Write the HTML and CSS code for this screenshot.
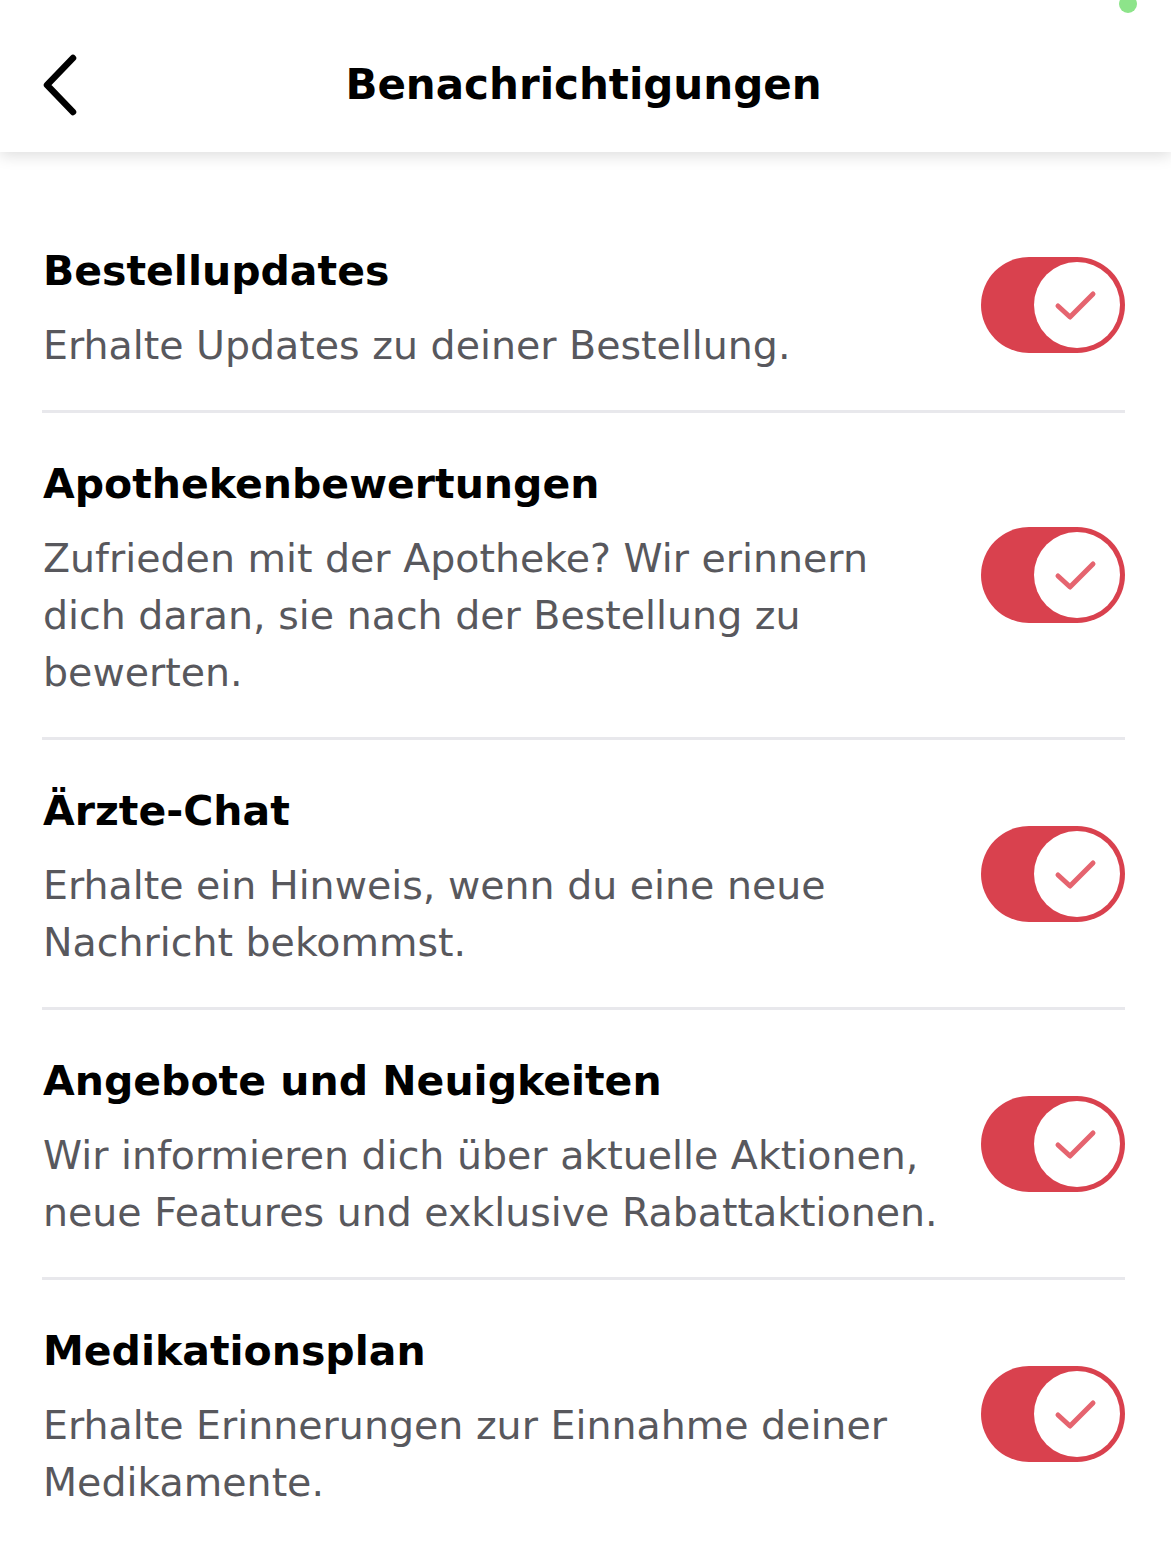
FILE: index.html
```html
<!DOCTYPE html>
<html lang="de">
    <head>
        <meta charset="utf-8" />
        <meta name="viewport" content="width=device-width, initial-scale=1" />
        <title>Benachrichtigungen</title>
        <link rel="stylesheet" href="styles.css">
    </head>
    <body>
        <div class="status-dot"></div>

        <header class="nav-bar">
            <button class="back-button" aria-label="Zurück">
                <svg width="44" height="62" viewBox="0 0 44 62">
                    <path d="M35 4 L9 31 L35 58" fill="none" stroke="#000" stroke-width="6.5" stroke-linecap="round" stroke-linejoin="round"/>
                </svg>
            </button>
            <h1 class="nav-title">Benachrichtigungen</h1>
        </header>

        <main class="settings-list">
            <div class="setting-row">
                <div class="setting-text">
                    <h2 class="setting-title">Bestellupdates</h2>
                    <p class="setting-desc">Erhalte Updates zu deiner Bestellung.</p>
                </div>
                <div class="toggle"><span class="knob"><svg width="50" height="40" viewBox="0 0 50 40"><path d="M6 21 L18 32 L41 9" /></svg></span></div>
            </div>
            <div class="setting-row">
                <div class="setting-text">
                    <h2 class="setting-title">Apothekenbewertungen</h2>
                    <p class="setting-desc">Zufrieden mit der Apotheke? Wir erinnern dich daran, sie nach der Bestellung zu bewerten.</p>
                </div>
                <div class="toggle"><span class="knob"><svg width="50" height="40" viewBox="0 0 50 40"><path d="M6 21 L18 32 L41 9" /></svg></span></div>
            </div>
            <div class="setting-row">
                <div class="setting-text">
                    <h2 class="setting-title">Ärzte-Chat</h2>
                    <p class="setting-desc">Erhalte ein Hinweis, wenn du eine neue Nachricht bekommst.</p>
                </div>
                <div class="toggle"><span class="knob"><svg width="50" height="40" viewBox="0 0 50 40"><path d="M6 21 L18 32 L41 9" /></svg></span></div>
            </div>
            <div class="setting-row">
                <div class="setting-text">
                    <h2 class="setting-title">Angebote und Neuigkeiten</h2>
                    <p class="setting-desc">Wir informieren dich über aktuelle Aktionen, neue Features und exklusive Rabattaktionen.</p>
                </div>
                <div class="toggle"><span class="knob"><svg width="50" height="40" viewBox="0 0 50 40"><path d="M6 21 L18 32 L41 9" /></svg></span></div>
            </div>
            <div class="setting-row">
                <div class="setting-text">
                    <h2 class="setting-title">Medikationsplan</h2>
                    <p class="setting-desc">Erhalte Erinnerungen zur Einnahme deiner Medikamente.</p>
                </div>
                <div class="toggle"><span class="knob"><svg width="50" height="40" viewBox="0 0 50 40"><path d="M6 21 L18 32 L41 9" /></svg></span></div>
            </div>
        </main>
    </body>
</html>
```

FILE: styles.css
```css
body, html {
    margin: 0;
    padding: 0;
    background: #fff;
    font-family: "DejaVu Sans", "Noto Sans", sans-serif;
}

.status-dot {
    position: absolute;
    top: -5px;
    left: 1119px;
    width: 18px;
    height: 18px;
    border-radius: 50%;
    background-color: #8de48a;
    z-index: 10;
}

.nav-bar {
    position: relative;
    height: 152px;
    display: flex;
    align-items: center;
    justify-content: center;
    background: #fff;
    box-shadow: 0 4px 14px rgba(0, 0, 0, 0.13);
}

.back-button {
    position: absolute;
    left: 38px;
    top: 54px;
    padding: 0;
    border: none;
    background: none;
    cursor: pointer;
}

.back-button svg {
    display: block;
}

.nav-title {
    margin: 0 0 0 -4px;
    padding-top: 16px;
    font-size: 42px;
    font-weight: 700;
    color: #000;
}

.settings-list {
    padding: 48px 46px 0 42px;
}

.setting-row {
    display: flex;
    align-items: center;
    justify-content: space-between;
    padding: 44px 0 36px;
    border-bottom: 3px solid #e8e8ec;
}

.setting-row:last-child {
    border-bottom: none;
}

.setting-text {
    flex: 1;
    margin-right: 28px;
    padding-left: 1px;
}

.setting-title {
    margin: 0 0 19px;
    font-size: 41px;
    line-height: 54px;
    font-weight: 700;
    color: #000;
}

.setting-desc {
    margin: 0;
    font-size: 39.5px;
    line-height: 57px;
    color: #58585d;
}

.toggle {
    flex: none;
    width: 144px;
    height: 96px;
    margin-bottom: 8px;
    border-radius: 48px;
    background-color: #d9414e;
    display: flex;
    align-items: center;
    justify-content: flex-end;
    padding-right: 5px;
    box-sizing: border-box;
}

.knob {
    width: 86px;
    height: 86px;
    border-radius: 50%;
    background: #fff;
    display: flex;
    align-items: center;
    justify-content: center;
}

.knob svg path {
    fill: none;
    stroke: #e5646f;
    stroke-width: 5;
    stroke-linecap: round;
    stroke-linejoin: round;
}
```
